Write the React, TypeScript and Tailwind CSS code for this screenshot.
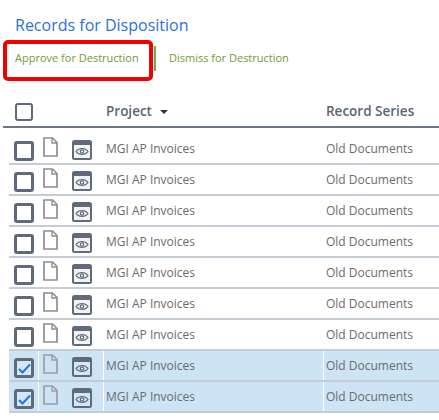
const rows = [false, false, false, false, false, false, false, true, true];

const FileIcon = ({ muted }: { muted: boolean }) => (
  <svg width="15" height="20" viewBox="0 0 15 20" fill="none" className={muted ? 'opacity-80' : ''}>
    <path d="M1 1H9.5L14 5.5V19H1V1Z" stroke="#8f8f8f" strokeWidth="1.7" />
    <path d="M9 1V6H14" stroke="#8f8f8f" strokeWidth="1.4" />
  </svg>
);

const ViewIcon = ({ muted }: { muted: boolean }) => (
  <svg width="20" height="20" viewBox="0 0 20 20">
    <rect x="0" y="0" width="20" height="20" rx="2.5" fill="#5f6b7a" />
    <rect x="2" y="5" width="16" height="13" fill={muted ? '#d5e7f5' : '#f2f3f5'} />
    <path d="M4 11.5C5.5 9.5 7.5 8.5 10 8.5C12.5 8.5 14.5 9.5 16 11.5C14.5 13.5 12.5 14.5 10 14.5C7.5 14.5 5.5 13.5 4 11.5Z" fill="none" stroke="#5f6b7a" strokeWidth="1.2" />
    <circle cx="10" cy="11.5" r="1.7" fill="none" stroke="#5f6b7a" strokeWidth="1.2" />
  </svg>
);

const Check = ({ checked, small }: { checked?: boolean; small?: boolean }) => (
  <div
    className={`rounded-[3px] border-[#5f6b7a] flex items-center justify-center shrink-0 ${
      small ? 'w-[18px] h-[18px] border-[2px]' : 'w-[20px] h-[20px] border-[3px]'
    } ${checked ? 'bg-[#d5e7f5]' : 'bg-white'}`}
  >
    {checked && (
      <svg width="13" height="11" viewBox="0 0 13 11" fill="none">
        <path d="M1 6L4.5 9.5L12 1.5" stroke="#1f76e0" strokeWidth="2" />
      </svg>
    )}
  </div>
);

export default function App() {
  return (
    <div className="w-[439px] h-[420px] bg-white overflow-hidden font-['Open_Sans',sans-serif]">
      <h1 className="pl-[15px] pt-[14px] text-[16px] leading-[22px] text-[#2f6fd8]">Records for Disposition</h1>

      <div className="relative mt-[10px] h-[25px] flex items-center text-[11px] text-[#6f9a3c]">
        <div className="absolute left-[3px] top-[-6px] w-[150px] h-[41px] border-[4px] border-[#f00000] rounded-[5px]" />
        <span className="pl-[15px] w-[154px]">Approve for Destruction</span>
        <span className="w-[2px] h-[25px] bg-[#6ab04c]" />
        <span className="pl-[13px]">Dismiss for Destruction</span>
      </div>

      <div className="mt-[31px] ml-[3px] h-[26px] flex items-start border-b-[2px] border-[#6b7684] text-[13.5px] font-semibold text-[#5a6573]">
        <div className="w-[103px] pl-[12px] pt-[1px]">
          <Check small />
        </div>
        <div className="w-[220px] flex items-center gap-[8px] leading-[19px]">
          Project
          <span className="w-0 h-0 border-x-[4px] border-x-transparent border-t-[4px] border-t-[#333]" />
        </div>
        <div className="leading-[19px]">Record Series</div>
      </div>

      <div className="mt-[6px] ml-[9px]">
        {rows.map((selected, i) => (
          <div
            key={i}
            className={`h-[31px] flex border-b-2 border-[#c4ccd6] text-[12px] text-[#6b6b6b] ${selected ? 'bg-[#cde4f5]' : 'bg-white'}`}
          >
            <div className="w-[30px] pl-[5px] pt-[7px] border-r border-white">
              <Check checked={selected} />
            </div>
            <div className="w-[65px] flex items-start border-r border-white">
              <div className="pl-[4px] pt-[3px] w-[33px]">
                <FileIcon muted={selected} />
              </div>
              <div className="pt-[6px]">
                <ViewIcon muted={selected} />
              </div>
            </div>
            <div className="w-[220px] pl-[2px] flex items-center border-r border-white">MGI AP Invoices</div>
            <div className="pl-[2px] flex items-center">Old Documents</div>
          </div>
        ))}
      </div>
    </div>
  );
}
